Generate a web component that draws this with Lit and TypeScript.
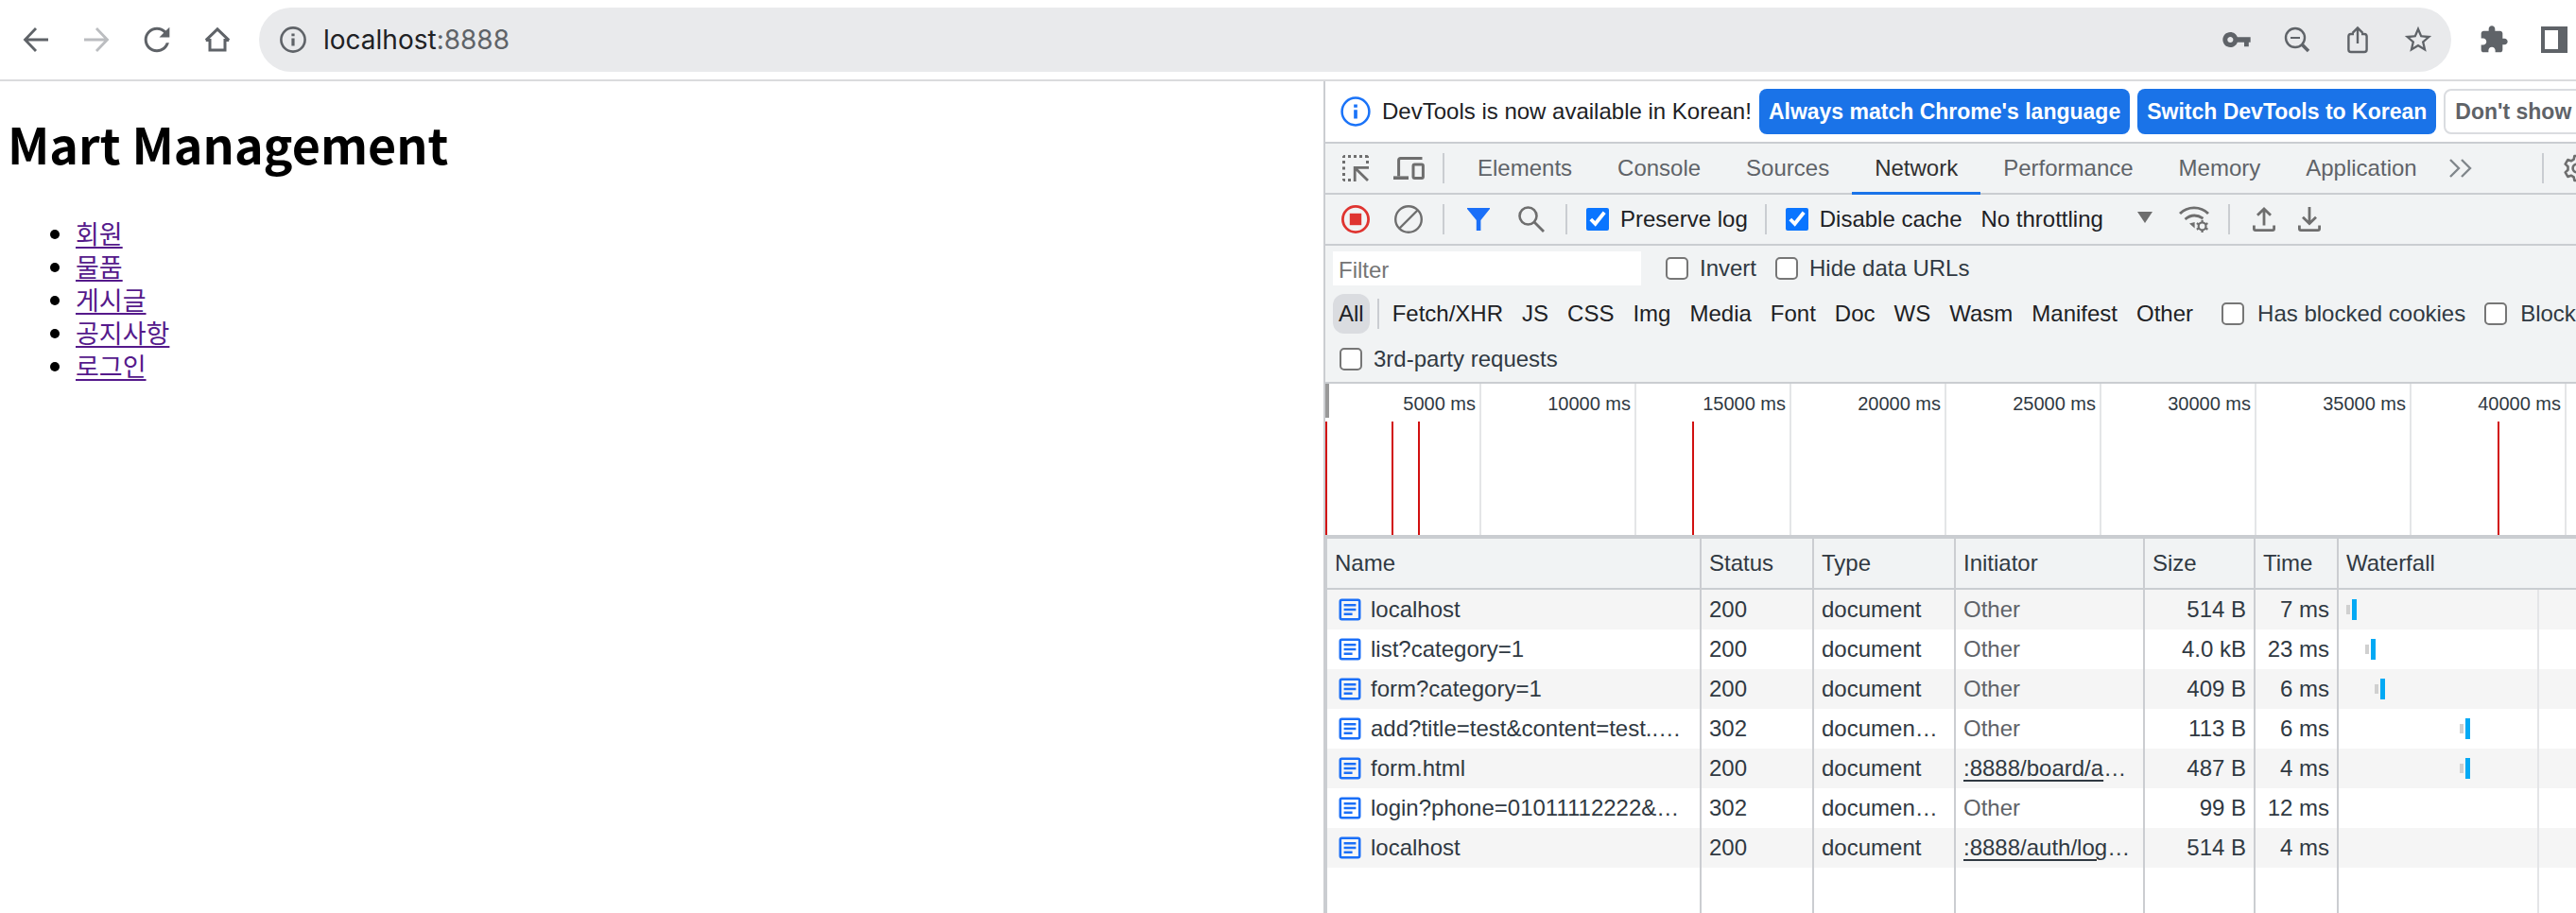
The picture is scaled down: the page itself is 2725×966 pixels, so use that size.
import { LitElement, html, css, svg, nothing, TemplateResult } from 'lit';
import { customElement } from 'lit/decorators.js';
import { classMap } from 'lit/directives/class-map.js';

interface RequestRow {
  name: string;
  status: string;
  type: string;
  initiator: string;
  link?: boolean;
  size: string;
  time: string;
  start?: number;
}

const PAGE_LINKS = ['회원', '물품', '게시글', '공지사항', '로그인'];
const TABS = ['Elements', 'Console', 'Sources', 'Network', 'Performance', 'Memory', 'Application'];
const TYPES = ['Fetch/XHR', 'JS', 'CSS', 'Img', 'Media', 'Font', 'Doc', 'WS', 'Wasm', 'Manifest', 'Other'];
const TICKS = [5000, 10000, 15000, 20000, 25000, 30000, 35000, 40000];
const OVERVIEW_MARKS = [0, 70, 98, 388, 1240];
const COLUMNS = ['Name', 'Status', 'Type', 'Initiator', 'Size', 'Time', 'Waterfall'];
const ROWS: RequestRow[] = [
  { name: 'localhost', status: '200', type: 'document', initiator: 'Other', size: '514 B', time: '7 ms', start: 8 },
  { name: 'list?category=1', status: '200', type: 'document', initiator: 'Other', size: '4.0 kB', time: '23 ms', start: 28 },
  { name: 'form?category=1', status: '200', type: 'document', initiator: 'Other', size: '409 B', time: '6 ms', start: 38 },
  { name: 'add?title=test&content=test..…', status: '302', type: 'documen…', initiator: 'Other', size: '113 B', time: '6 ms', start: 128 },
  { name: 'form.html', status: '200', type: 'document', initiator: ':8888/board/a', link: true, size: '487 B', time: '4 ms', start: 128 },
  { name: 'login?phone=01011112222&…', status: '302', type: 'documen…', initiator: 'Other', size: '99 B', time: '12 ms' },
  { name: 'localhost', status: '200', type: 'document', initiator: ':8888/auth/log', link: true, size: '514 B', time: '4 ms' },
];

const icon = (w: number, h: number, body: TemplateResult, box = `0 0 ${w} ${h}`) =>
  html`<svg width=${w} height=${h} viewBox=${box} fill="none" stroke="currentColor" aria-hidden="true">${body}</svg>`;
const solid = (size: number, d: string) =>
  icon(size, size, svg`<path fill="currentColor" stroke="none" d=${d} />`, '0 0 24 24');

const backIcon = icon(28, 28, svg`<path stroke-width="2.8" d="M27 14H3M14 2 2.5 14 14 26" />`);
const forwardIcon = icon(28, 28, svg`<path stroke-width="2.8" d="M1 14H25M14 2 25.5 14 14 26" />`);
const reloadIcon = solid(40, 'M17.65 6.35C16.2 4.9 14.21 4 12 4c-4.42 0-7.99 3.58-7.99 8s3.57 8 7.99 8c3.73 0 6.84-2.55 7.73-6h-1.9c-.82 2.4-3.1 4.2-5.83 4.2-3.4 0-6.2-2.8-6.2-6.2s2.8-6.2 6.2-6.2c1.7 0 3.24.69 4.32 1.88L13.5 10.5H20V4z');
const homeIcon = icon(28, 28, svg`<path stroke-width="3" d="M6 13V25H22V13M1.8 14.6H6M22 14.6H26.2M1.8 14.6 14 2.8 26.2 14.6" />`);
const infoIcon = (s: number, w: number) =>
  icon(s, s, svg`<circle cx="14" cy="14" r="12.6" stroke-width=${w} /><path stroke-width="3.2" d="M14 12.4V20.6M14 7.4V10.2" />`, '0 0 28 28');
const keyIcon = solid(32, 'M12.65 10C11.83 7.67 9.61 6 7 6c-3.31 0-6 2.69-6 6s2.69 6 6 6c2.61 0 4.83-1.67 5.65-4H18v3.5h3.6V14H23v-4H12.65zM7 14.3c-1.3 0-2.3-1-2.3-2.3s1-2.3 2.3-2.3 2.3 1 2.3 2.3-1 2.3-2.3 2.3z');
const zoomOutIcon = icon(28, 28, svg`<circle cx="12" cy="12" r="10" stroke-width="2.4" /><path stroke-width="2" d="M7 12H17" /><path stroke-width="3.6" d="M18.8 18.8 26 26" />`);
const shareIcon = icon(24, 30, svg`<path stroke-width="2.4" d="M8 9H5Q2.4 9 2.4 11.6V25.4Q2.4 28 5 28H19Q21.6 28 21.6 25.4V11.6Q21.6 9 19 9H16M12 19V2.6M6.6 7.8 12 2.4 17.4 7.8" />`);
const starIcon = solid(34, 'M22 9.24l-7.19-.62L12 2 9.19 8.63 2 9.24l5.46 4.73L5.82 21 12 17.27 18.18 21l-1.63-7.03L22 9.24zM12 15.4l-3.76 2.27 1-4.28-3.32-2.88 4.38-.38L12 6.1l1.71 4.04 4.38.38-3.32 2.88 1 4.28L12 15.4z');
const puzzleIcon = solid(32, 'M20.5 11H19V7c0-1.1-.9-2-2-2h-4V3.5C13 2.12 11.88 1 10.5 1S8 2.12 8 3.5V5H4c-1.1 0-1.99.9-1.99 2v3.8H3.5c1.49 0 2.7 1.21 2.7 2.7s-1.21 2.7-2.7 2.7H2V20c0 1.1.9 2 2 2h3.8v-1.5c0-1.49 1.21-2.7 2.7-2.7 1.49 0 2.7 1.21 2.7 2.7V22H17c1.1 0 2-.9 2-2v-4h1.5c1.38 0 2.5-1.12 2.5-2.5S21.88 11 20.5 11z');
const panelIcon = icon(28, 28, svg`<path fill="currentColor" fill-rule="evenodd" stroke="none" d="M0 0H28V28H0ZM4 4V24H18V4Z" />`);

const inspectIcon = icon(30, 28, svg`
  <path fill="currentColor" stroke="none" d="M1 1.5 2.5 0H4V3H1ZM7 0h3v3H7ZM13 0h3v3H13ZM19 0h3v3H19ZM25 0h2.5L29 1.5V3H25ZM26 6h3v3H26ZM1 6h3v3H1ZM1 12.5h3v3H1ZM1 19h3v3H1ZM1 25h3v3H2.5L1 26.5ZM7 25h3v3H7Z" />
  <path stroke-width="2.8" d="M14.2 28V13.4H29M15 14.2 28 27" />`);
const deviceIcon = icon(33, 24, svg`<path stroke-width="3" d="M30.5 1.6H7.5Q5.6 1.6 5.6 3.5V20.5" /><path stroke-width="3.6" d="M0 22.2H16" /><rect x="21" y="8" width="10.4" height="14.5" rx="1.5" stroke-width="3" />`);
const recordIcon = icon(30, 30, svg`<circle cx="15" cy="15" r="13.6" stroke-width="2.8" /><rect x="8.8" y="8.8" width="12.4" height="12.4" fill="currentColor" stroke="none" />`);
const clearIcon = icon(30, 30, svg`<circle cx="15" cy="15" r="13.8" stroke-width="2.4" /><path stroke-width="2.4" d="M5.5 24.5 24.5 5.5" />`);
const funnelIcon = icon(24, 24, svg`<path fill="currentColor" stroke="none" d="M0 0H24V1L14.4 13V24H9.8V13L0 1Z" />`);
const searchIcon = icon(28, 28, svg`<circle cx="10.5" cy="10.5" r="9" stroke-width="2.6" /><path stroke-width="2.8" d="M17 17 27 27" />`);
const wifiIcon = icon(32, 28, svg`
  <path stroke-width="2.8" d="M1 8Q7 1.8 16 1.8T31 8" /><path stroke-width="2.8" d="M6.5 14Q15.5 6.4 25.5 13.2" />
  <path fill="currentColor" stroke="none" d="M11 18.4 16.6 17V23.4Z" />
  <circle cx="24.6" cy="21.4" r="3.9" stroke-width="2.2" /><path stroke-width="2.2" d="M24.6 17.5V14.8M24.6 25.3V28M21.2 19.5 18.8 18.1M28 19.5 30.4 18.1M21.2 23.3 18.8 24.7M28 23.3 30.4 24.7" />`);
const tray = svg`<path stroke-width="2.8" d="M1.4 19.5V23Q1.4 24.6 3 24.6H21Q22.6 24.6 22.6 23V19.5" />`;
const uploadIcon = icon(24, 26, svg`${tray}<path stroke-width="2.8" d="M12 19.5V2.4M5 8.8 12 2 19 8.8" />`);
const downloadIcon = icon(24, 26, svg`${tray}<path stroke-width="2.8" d="M12 0V17M5 10.8 12 17.6 19 10.8" />`);
const moreIcon = icon(24, 20, svg`<path stroke-width="2.4" d="M1 1 10 10 1 19M13 1 22 10 13 19" />`);
const gearIcon = icon(30, 30, svg`<circle cx="15" cy="15" r="4.4" stroke-width="2.6" /><path stroke-width="2.6" stroke-linejoin="round" d="M12.4 2H17.6L18.3 5.6 21.2 7.3 24.7 6.1 27.3 10.6 24.5 13.2V16.8L27.3 19.4 24.7 23.9 21.2 22.7 18.3 24.4 17.6 28H12.4L11.7 24.4 8.8 22.7 5.3 23.9 2.7 19.4 5.5 16.8V13.2L2.7 10.6 5.3 6.1 8.8 7.3 11.7 5.6Z" />`);
const fileIcon = icon(24, 24, svg`<rect x="1.8" y="1.8" width="20.4" height="20.4" rx="1.6" stroke-width="2.6" /><path stroke-width="2.4" d="M5.6 7.2H18.4M5.6 12H18.4M5.6 16.8H14.6" />`);

const base = css`
  :host, * { box-sizing: border-box; }
  svg { display: block; flex: none; }
  button {
    display: flex; align-items: center; justify-content: center; flex: none;
    margin: 0; padding: 0; border: 0; background: none; color: inherit; font: inherit; white-space: nowrap;
  }
`;

@customElement('browser-bar')
export class BrowserBar extends LitElement {
  static styles = [base, css`
    :host {
      display: flex; align-items: center; height: 86px; padding: 0 5px 0 20px;
      border-bottom: 2px solid #dadbdd; background: #fff; color: #5f6368;
    }
    .group { display: flex; gap: 28px; }
    .group button { width: 36px; height: 40px; }
    .group .off { color: #bbbdc0; }
    .address {
      display: flex; align-items: center; flex: 1; min-width: 0; height: 68px;
      margin: 0 27px 0 26px; padding: 0 17px 0 22px; border-radius: 34px; background: #e9eaec;
    }
    .url { flex: 1; margin-left: 18px; font: 28px/36px Inter, sans-serif; }
    .host { color: #202124; }
  `];
  render() {
    return html`
      <nav class="group" aria-label="Navigation">
        <button aria-label="Back">${backIcon}</button>
        <button class="off" aria-label="Forward">${forwardIcon}</button>
        <button aria-label="Reload">${reloadIcon}</button>
        <button aria-label="Home">${homeIcon}</button>
      </nav>
      <div class="address">
        ${infoIcon(28, 2.6)}
        <div class="url"><span class="host">localhost</span>:8888</div>
        <div class="group">
          <button aria-label="Passwords">${keyIcon}</button>
          <button aria-label="Zoom">${zoomOutIcon}</button>
          <button aria-label="Share">${shareIcon}</button>
          <button aria-label="Bookmark">${starIcon}</button>
        </div>
      </div>
      <div class="group">
        <button aria-label="Extensions">${puzzleIcon}</button>
        <button aria-label="Side panel">${panelIcon}</button>
      </div>`;
  }
}

@customElement('mart-page')
export class MartPage extends LitElement {
  static styles = [base, css`
    :host { display: block; padding: 31px 8px 0; color: #000; font-family: "Noto Sans CJK KR", sans-serif; }
    h1 { margin: 0 0 42px; font-size: 52px; line-height: 70px; font-weight: 700; }
    ul { margin: 0; padding: 0 0 0 72px; font-size: 27px; line-height: 35px; }
    a { color: #551a8b; text-decoration: underline; text-decoration-thickness: 2px; text-underline-offset: 3px; }
  `];
  render() {
    return html`<h1>Mart Management</h1>
      <ul>${PAGE_LINKS.map((t) => html`<li><a href="#">${t}</a></li>`)}</ul>`;
  }
}

@customElement('dev-tools')
export class DevTools extends LitElement {
  static styles = [base, css`
    :host {
      display: flex; flex-direction: column; min-width: 0; overflow: hidden;
      border-left: 2px solid #cbcdd1; background: #fff; color: #202124;
      font: 24px/28px "Liberation Sans", Arial, sans-serif;
    }
    .bar {
      display: flex; align-items: center; flex: none; height: 54px; padding-left: 16px;
      border-bottom: 2px solid #cacdd1; background: #f1f3f4; color: #6e6e6e; white-space: nowrap;
    }
    .info { height: 66px; background: #fff; color: #202124; gap: 8px; }
    .info svg { color: #1a73f8; margin-right: 4px; }
    .info button {
      height: 48px; padding: 0 10px; border-radius: 8px; background: #1a73e8; color: #fff;
      font-size: 23px; font-weight: 700;
    }
    .info .plain { min-width: 240px; justify-content: flex-start; border: 2px solid #dadce0; background: #fff; color: #5f6368; }
    .tools { display: flex; gap: 24px; }
    .tools button { width: 32px; height: 32px; }
    .files { gap: 16px; }
    .sep { flex: none; width: 2px; height: 32px; margin: 0 20px; background: #cacdd1; }
    .tabs { display: flex; align-self: stretch; margin: 0 2px -2px -9px; }
    .tabs button { padding: 0 24px; color: #5f6368; border-bottom: 3px solid transparent; }
    .tabs .on { color: #303030; border-color: #1a73e8; }
    .more { width: 40px; height: 32px; color: #80868b; }
    .far { margin-left: 66px; }
    .red { color: #df3430; }
    .blue { color: #1a6ff8; }
    label { display: flex; align-items: center; gap: 12px; flex: none; }
    input[type='checkbox'] { flex: none; width: 24px; height: 24px; margin: 0; accent-color: #0a75ff; }
    input[type='checkbox']:not(:checked) { appearance: none; border: 2px solid #767676; border-radius: 5px; background: #fff; }
    .strong { margin-right: -2px; color: #202124; }
    .throttle { position: relative; display: block; margin: 0 28px 0 22px; }
    select {
      display: block; width: 182px; height: 36px; padding: 0; border: 0; appearance: none;
      background: none; color: #202124; font: inherit;
    }
    .caret { position: absolute; right: 0; top: 10px; }
    .filters { flex: none; padding-left: 8px; border-bottom: 2px solid #cacdd1; background: #f1f3f4; color: #303942; white-space: nowrap; }
    .line { display: flex; align-items: center; height: 48px; gap: 20px; }
    .line input[type='text'] {
      width: 326px; height: 36px; margin-right: 6px; padding: 4px 6px 0; border: 0; border-radius: 0;
      background: #fff; color: #202124; font: inherit;
    }
    .line input::placeholder { color: #757575; }
    .kinds { gap: 8px; color: #202124; }
    .kinds button { height: 42px; padding: 0 6px; border-radius: 12px; }
    .kinds .on { background: #dadce0; }
    .kinds .sep { margin: 0; }
    .kinds label { margin-left: 16px; margin-right: -4px; gap: 14px; color: #303942; }
    .third { padding-left: 7px; }
    .overview { position: relative; display: flex; flex: none; height: 164px; border-bottom: 4px solid #cacdd1; color: #303942; }
    .tick { flex: none; width: 164px; padding: 9px 4px 0 0; border-right: 2px solid #e4e5e7; font-size: 20px; line-height: 24px; text-align: right; }
    .tick:first-child { width: 165px; }
    .handle { position: absolute; left: 0; top: 0; width: 4px; height: 36px; background: #999; }
    .mark { position: absolute; top: 40px; bottom: 0; width: 2px; background: #d11010; }
    .grid { flex: 1; min-height: 0; overflow: hidden; }
    table { width: 100%; height: 100%; table-layout: fixed; border-collapse: separate; border-spacing: 0; color: #303942; border-left: 2px solid #cacdd1; }
    th, td { height: 42px; padding: 0 8px; border-right: 2px solid #cbcdd1; text-align: left; font-weight: 400; white-space: nowrap; overflow: hidden; }
    th { height: 54px; border-bottom: 2px solid #cacdd1; background: #f1f3f4; }
    th:last-child, td:last-child { border-right: 0; }
    tbody tr:nth-child(odd) { background: #f5f5f5; }
    tbody tr.rest { background: #fff; }
    tbody tr.rest td { height: auto; }
    .c-name { width: 396px; } .c-status { width: 119px; } .c-type { width: 150px; } .c-init { width: 200px; }
    .c-size { width: 117px; } .c-time { width: 88px; }
    .name { display: flex; align-items: center; gap: 10px; padding-left: 4px; }
    .name svg { color: #1a6ff8; }
    td.num { text-align: right; }
    .other { color: #5f6368; }
    td a { color: #303942; text-decoration: underline; text-decoration-thickness: 2px; text-underline-offset: 4px; }
    td.fall { padding: 0; }
    .lane { display: flex; align-items: center; width: 212px; height: 100%; border-right: 2px solid #e4e5e7; }
    .wait { flex: none; width: 4px; height: 10px; background: #d0d0d0; }
    .load { flex: none; width: 5px; height: 22px; margin-left: 2px; background: #03a9f4; }
  `];

  private check(text: string, checked = false, cls = '') {
    return html`<label class=${cls}><input type="checkbox" .checked=${checked} />${text}</label>`;
  }

  private row(r: RequestRow) {
    return html`<tr>
      <td><div class="name">${fileIcon}<span>${r.name}</span></div></td>
      <td>${r.status}</td>
      <td>${r.type}</td>
      <td class=${classMap({ other: !r.link })}>${r.link ? html`<a href="#">${r.initiator}</a>…` : r.initiator}</td>
      <td class="num">${r.size}</td>
      <td class="num">${r.time}</td>
      <td class="fall"><div class="lane">${r.start === undefined ? nothing : html`
        <span class="wait" style="margin-left:${r.start}px"></span><span class="load"></span>`}</div></td>
    </tr>`;
  }

  render() {
    return html`
      <div class="bar info">
        ${infoIcon(32, 2.2)}
        <span>DevTools is now available in Korean!</span>
        <button>Always match Chrome's language</button>
        <button>Switch DevTools to Korean</button>
        <button class="plain">Don't show</button>
      </div>
      <div class="bar">
        <div class="tools">
          <button aria-label="Inspect">${inspectIcon}</button>
          <button aria-label="Device toolbar">${deviceIcon}</button>
        </div>
        <span class="sep"></span>
        <div class="tabs" role="tablist">
          ${TABS.map((t) => html`<button role="tab" class=${classMap({ on: t === 'Network' })}>${t}</button>`)}
        </div>
        <button class="more" aria-label="More tabs">${moreIcon}</button>
        <span class="sep far"></span>
        <button aria-label="Settings">${gearIcon}</button>
      </div>
      <div class="bar">
        <div class="tools">
          <button class="red" aria-label="Stop recording">${recordIcon}</button>
          <button aria-label="Clear">${clearIcon}</button>
        </div>
        <span class="sep"></span>
        <div class="tools">
          <button class="blue" aria-label="Filter">${funnelIcon}</button>
          <button aria-label="Search">${searchIcon}</button>
        </div>
        <span class="sep"></span>
        ${this.check('Preserve log', true, 'strong')}
        <span class="sep"></span>
        ${this.check('Disable cache', true, 'strong')}
        <div class="throttle">
          <select aria-label="Throttling"><option>No throttling</option></select>
          <svg class="caret" width="16" height="12" viewBox="0 0 16 12" aria-hidden="true"><path fill="currentColor" d="M0 0H16L8 12Z" /></svg>
        </div>
        <button aria-label="Network conditions">${wifiIcon}</button>
        <span class="sep"></span>
        <div class="tools files">
          <button aria-label="Import">${uploadIcon}</button>
          <button aria-label="Export">${downloadIcon}</button>
        </div>
      </div>
      <div class="filters">
        <div class="line">
          <input type="text" placeholder="Filter" aria-label="Filter" />
          ${this.check('Invert')}${this.check('Hide data URLs')}
        </div>
        <div class="line kinds">
          <button class="on">All</button>
          <span class="sep"></span>
          ${TYPES.map((t) => html`<button>${t}</button>`)}
          ${this.check('Has blocked cookies')}${this.check('Block')}
        </div>
        <div class="line third">${this.check('3rd-party requests')}</div>
      </div>
      <div class="overview">
        ${TICKS.map((t) => html`<div class="tick">${t} ms</div>`)}
        <span class="handle"></span>
        ${OVERVIEW_MARKS.map((x) => html`<span class="mark" style="left:${x}px"></span>`)}
      </div>
      <div class="grid">
        <table>
          <colgroup>
            <col class="c-name" /><col class="c-status" /><col class="c-type" /><col class="c-init" />
            <col class="c-size" /><col class="c-time" /><col />
          </colgroup>
          <thead><tr>${COLUMNS.map((c) => html`<th scope="col">${c}</th>`)}</tr></thead>
          <tbody>
            ${ROWS.map((r) => this.row(r))}
            <tr class="rest"><td></td><td></td><td></td><td></td><td></td><td></td><td class="fall"><div class="lane"></div></td></tr>
          </tbody>
        </table>
      </div>`;
  }
}

@customElement('app-root')
export class AppRoot extends LitElement {
  static styles = css`
    :host { display: flex; flex-direction: column; height: 100vh; overflow: hidden; background: #fff; }
    .panes { display: grid; grid-template-columns: minmax(0, 1400fr) minmax(0, 1325fr); grid-template-rows: minmax(0, 1fr); flex: 1; min-height: 0; }
  `;
  render() {
    return html`<browser-bar></browser-bar>
      <main class="panes"><mart-page></mart-page><dev-tools></dev-tools></main>`;
  }
}
